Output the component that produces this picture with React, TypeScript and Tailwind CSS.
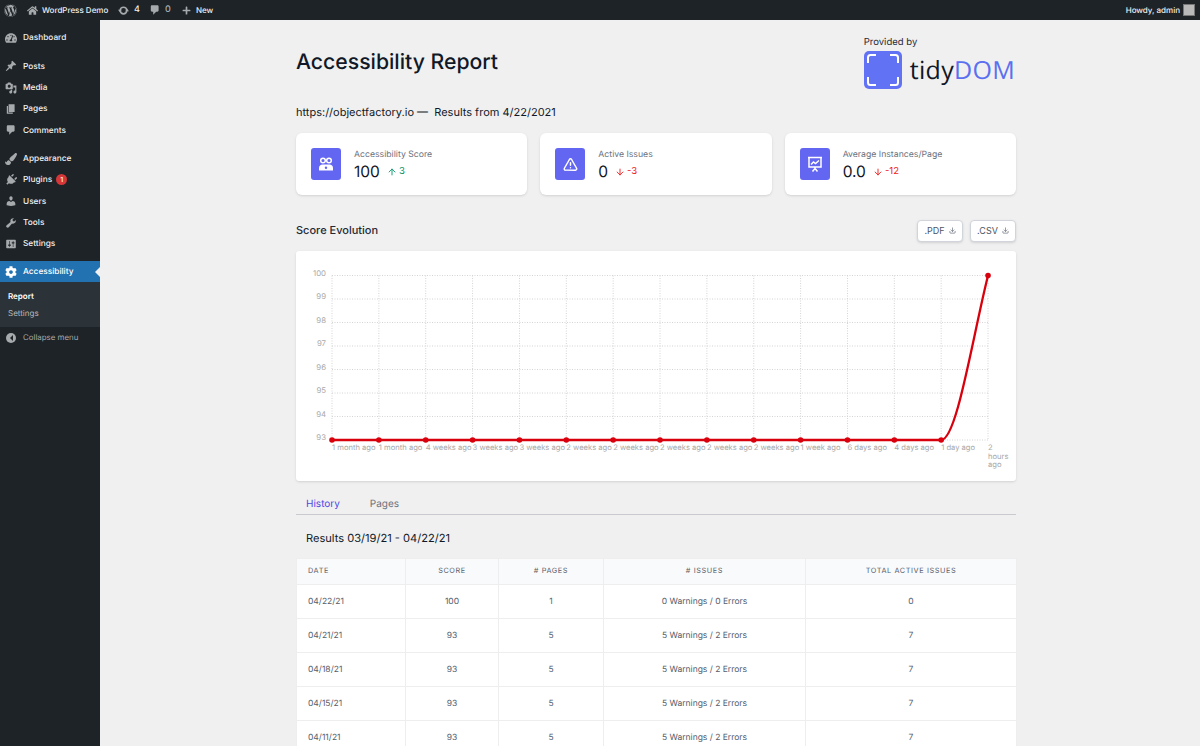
import React from 'react';
import { ArrowDown, ArrowUp, Download, TriangleAlert } from 'lucide-react';
import { FaWordpress, FaHome, FaPlus, FaTachometerAlt, FaPaintBrush, FaPlug, FaCog } from 'react-icons/fa';

type IconProps = { className?: string };

const dashIcon = (d: string) => ({ className }: IconProps) => (
  <svg viewBox="0 0 20 20" className={className} fill="currentColor">
    <path d={d} fillRule="evenodd" />
  </svg>
);

const PinIcon = dashIcon('M10.44 3.02l1.82-1.82 6.36 6.35-1.83 1.82c-1.05-.68-2.48-.57-3.41.35l-.76.76c-.92.93-1.04 2.36-.35 3.41l-1.83 1.82-2.41-2.41-2.8 2.79c-.42.42-3.38 2.71-3.8 2.29s1.86-3.39 2.28-3.81l2.79-2.79L4.1 9.36l1.83-1.82c1.05.69 2.48.57 3.4-.35l.77-.76c.92-.93 1.04-2.36.34-3.41z');
const MediaIcon = dashIcon('M13 11V4c0-.55-.45-1-1-1h-1.67L9 1H5L3.67 3H2c-.55 0-1 .45-1 1v7c0 .55.45 1 1 1h10c.55 0 1-.45 1-1zM7 4.5c1.38 0 2.5 1.12 2.5 2.5S8.38 9.5 7 9.5 4.5 8.38 4.5 7 5.62 4.500 7 4.500zM14 6h5v10.5c0 1.38-1.12 2.5-2.5 2.5S14 17.88 14 16.5s1.12-2.5 2.5-2.5c.17 0 .34.02.5.05V9h-3V6zm-4 8.05V13h2v3.5c0 1.38-1.12 2.5-2.5 2.5S7 17.88 7 16.5 8.12 14 9.5 14c.17 0 .34.02.5.05z');
const PagesIcon = dashIcon('M6 15V2h10v13H6zm-1 1h8v2H3V5h2v11z');
const CommentIcon = dashIcon('M5 2h9c1.1 0 2 .9 2 2v7c0 1.1-.9 2-2 2h-2l-5 5v-5H5c-1.1 0-2-.9-2-2V4c0-1.1.9-2 2-2z');
const UsersIcon = dashIcon('M10 9.25c-2.27 0-2.73-3.44-2.73-3.44C7 4.02 7.82 2 9.97 2c2.16 0 2.98 2.02 2.71 3.81 0 0-.41 3.44-2.68 3.44zm0 2.57L12.72 10c2.39 0 4.52 2.33 4.52 4.53v2.49s-3.65 1.13-7.24 1.13c-3.65 0-7.24-1.13-7.24-1.13v-2.49c0-2.25 1.94-4.48 4.48-4.48z');
const ToolsIcon = dashIcon('M16.68 9.77c-1.34 1.34-3.3 1.67-4.95.99l-5.41 6.52c-.99.99-2.59.99-3.57 0-.99-.98-.99-2.58 0-3.57l6.52-5.42c-.68-1.65-.35-3.61.99-4.95 1.28-1.28 3.12-1.62 4.72-1.06l-2.89 2.89 2.82 2.82 2.86-2.87c.53 1.58.18 3.39-1.09 4.65z');
const SettingsIcon = dashIcon('M18 16V4c0-.55-.45-1-1-1H3c-.55 0-1 .45-1 1v12c0 .55.45 1 1 1h14c.55 0 1-.45 1-1zM8 11h1c.55 0 1 .45 1 1s-.45 1-1 1H8v1.5c0 .28-.22.5-.5.5s-.5-.22-.5-.5V13H6c-.55 0-1-.45-1-1s.45-1 1-1h1V5.500c0-.28.22-.5.5-.5s.5.22.5.5V11zm5-2h-1c-.55 0-1-.45-1-1s.45-1 1-1h1V5.500c0-.28.22-.5.5-.5s.5.22.5.5V7h1c.55 0 1 .45 1 1s-.45 1-1 1h-1v5.5c0 .28-.22.5-.5.5s-.5-.22-.5-.5V9z');

const PlugIcon = ({ className }: IconProps) => <FaPlug className={`${className} rotate-45`} />;

const menuGroups: { label: string; icon: React.FC<IconProps>; badge?: string }[][] = [
  [{ label: 'Dashboard', icon: FaTachometerAlt }],
  [
    { label: 'Posts', icon: PinIcon },
    { label: 'Media', icon: MediaIcon },
    { label: 'Pages', icon: PagesIcon },
    { label: 'Comments', icon: CommentIcon },
  ],
  [
    { label: 'Appearance', icon: FaPaintBrush },
    { label: 'Plugins', icon: PlugIcon, badge: '1' },
    { label: 'Users', icon: UsersIcon },
    { label: 'Tools', icon: ToolsIcon },
    { label: 'Settings', icon: SettingsIcon },
  ],
];

const rows = [
  ['04/22/21', '100', '1', '0 Warnings / 0 Errors', '0'],
  ['04/21/21', '93', '5', '5 Warnings / 2 Errors', '7'],
  ['04/18/21', '93', '5', '5 Warnings / 2 Errors', '7'],
  ['04/15/21', '93', '5', '5 Warnings / 2 Errors', '7'],
  ['04/11/21', '93', '5', '5 Warnings / 2 Errors', '7'],
];

const xLabels = [
  '1 month ago', '1 month ago', '4 weeks ago', '3 weeks ago', '3 weeks ago', '2 weeks ago', '2 weeks ago',
  '2 weeks ago', '2 weeks ago', '2 weeks ago', '1 week ago', '6 days ago', '4 days ago', '1 day ago',
];

function UpdateIcon({ className }: IconProps) {
  return (
    <svg viewBox="0 0 20 20" className={className} fill="none" stroke="currentColor" strokeWidth="3">
      <circle cx="10" cy="10" r="6" />
      <path d="M0 8.500h7L3.500 13zM20 11.500h-7l3.500-4.500z" fill="currentColor" stroke="none" />
    </svg>
  );
}

function PeopleIcon() {
  return (
    <svg viewBox="0 0 16 14" className="w-[16px] h-[14px]" fill="none">
      <circle cx="5" cy="3.500" r="2.300" stroke="white" strokeWidth="1.500" />
      <circle cx="11" cy="3.500" r="2.300" stroke="white" strokeWidth="1.500" />
      <path d="M1 13.500v-2.500c0-2 1.500-3.500 3.500-3.500h7c2 0 3.500 1.500 3.500 3.500v2.500z" fill="white" />
      <circle cx="8" cy="10.800" r="1.200" fill="#6366f1" />
    </svg>
  );
}

function PresentationIcon() {
  return (
    <svg viewBox="0 0 16 16" className="w-[16px] h-[16px]" fill="none" stroke="white" strokeWidth="1.500">
      <path d="M1 1.500h14M2 1.500v9.500h12v-9.500" />
      <path d="M4 8.500l2.500-2.500 2 1.500L12 4.500" />
      <path d="M8 11v1.500M5.500 15.500L8 12.500l2.500 3" />
    </svg>
  );
}

function StatCard({ icon, title, value, delta, up }: { icon: React.ReactNode; title: string; value: string; delta: string; up?: boolean }) {
  return (
    <div className="h-[62px] bg-white rounded-md shadow-sm flex items-center pl-[15px]">
      <div className="w-[30px] h-[32px] rounded-[3px] bg-[#6366f1] flex items-center justify-center">{icon}</div>
      <div className="ml-[13px] mt-[3px]">
        <div className="text-[8.7px] leading-[12px] text-[#6b7280]">{title}</div>
        <div className="flex items-center mt-[1px] h-[20px]">
          <span className="text-[15.5px] leading-[20px] text-[#111827]">{value}</span>
          <span className={`ml-[7px] flex items-center text-[9.5px] ${up ? 'text-[#059669]' : 'text-[#ef1c1c]'}`}>
            {up ? <ArrowUp className="w-[10px] h-[10px] mr-[2px]" strokeWidth={2.2} /> : <ArrowDown className="w-[10px] h-[10px] mr-[2px]" strokeWidth={2.2} />}
            {delta}
          </span>
        </div>
      </div>
    </div>
  );
}

function ExportButton({ label }: { label: string }) {
  return (
    <button className="h-[22px] w-[46px] bg-white border border-[#d1d5db] rounded-[4px] shadow-sm flex items-center justify-center text-[9px] text-[#4b5563]">
      {label}
      <Download className="w-[7px] h-[7px] ml-[4px]" />
    </button>
  );
}

function ScoreChart() {
  const x0 = 36;
  const step = 46.86;
  const yTop = 24.5;
  const yStep = 23.5;
  const yBottom = yTop + yStep * 7;
  const xs = Array.from({ length: 15 }, (_, i) => x0 + step * i);
  return (
    <svg viewBox="0 0 720 230" className="w-[720px] h-[230px] block">
      {[0, 1, 2, 3, 4, 5, 6, 7].map(i => (
        <g key={i}>
          <line x1={x0} x2={xs[14]} y1={yTop + i * yStep} y2={yTop + i * yStep} stroke="#d4d4d4" strokeDasharray="1 1.500" />
          <text x={30} y={yTop + i * yStep} textAnchor="end" fontSize="7.800" fill="#a8a8a8">{100 - i}</text>
        </g>
      ))}
      {xs.map(x => (
        <line key={x} x1={x} x2={x} y1={yTop} y2={yBottom} stroke="#d4d4d4" strokeDasharray="1 1.500" />
      ))}
      {xLabels.map((label, i) => (
        <text key={i} x={xs[i]} y={yBottom + 10} fontSize="7.600" fill="#a8a8a8">{label}</text>
      ))}
      <text x={xs[14]} y={yBottom + 10} fontSize="7.600" fill="#a8a8a8">2</text>
      <text x={xs[14]} y={yBottom + 18.5} fontSize="7.600" fill="#a8a8a8">hours</text>
      <text x={xs[14]} y={yBottom + 27} fontSize="7.600" fill="#a8a8a8">ago</text>
      <path
        d={`M${xs[0]} ${yBottom}H${xs[13]}C${xs[13] + 15.6} ${yBottom} ${xs[14] - 15.6} ${yTop + 62} ${xs[14]} ${yTop}`}
        fill="none"
        stroke="#d9000d"
        strokeWidth="2.300"
      />
      {xs.map((x, i) => (
        <circle key={x} cx={x} cy={i === 14 ? yTop : yBottom} r="2.800" fill="#d9000d" />
      ))}
    </svg>
  );
}

export default function App() {
  return (
    <div className="w-[1200px] h-[746px] overflow-hidden bg-[#f0f0f0] flex flex-col font-['Inter',sans-serif] [text-rendering:geometricPrecision]">
      {/* Admin bar */}
      <div className="h-[20px] bg-[#1d2327] flex items-center text-[#f0f0f1] text-[8px] font-medium shrink-0">
        <FaWordpress className="w-[13px] h-[13px] ml-[4px] text-[#a7aaad]" />
        <FaHome className="w-[11px] h-[11px] ml-[10px] text-[#a7aaad]" />
        <span className="ml-[4px] w-[66px] whitespace-nowrap">WordPress Demo</span>
        <UpdateIcon className="w-[11px] h-[11px] ml-[10px] text-[#a7aaad]" />
        <span className="ml-[5px] w-[5px] text-[9px]">4</span>
        <CommentIcon className="w-[12px] h-[12px] ml-[10px] text-[#a7aaad]" />
        <span className="ml-[4px] w-[5px] text-[9px] text-[#a7aaad]">0</span>
        <FaPlus className="w-[9px] h-[9px] ml-[12px] text-[#a7aaad]" />
        <span className="ml-[5px]">New</span>
        <span className="ml-auto">Howdy, admin</span>
        <div className="w-[12px] h-[12px] ml-[3px] mr-[5px] bg-[#b9b9b9] border border-[#777]" />
      </div>
      <div className="flex flex-1 min-h-0">
        {/* Sidebar */}
        <div className="w-[100px] bg-[#1d2327] text-[#f0f0f1] text-[8.3px] font-medium shrink-0">
          <div className="pt-[7.500px]">
            {menuGroups.map((group, g) => (
              <div key={g} className="mb-[7px]">
                {group.map(item => (
                  <div key={item.label} className="h-[21.300px] flex items-center">
                    <item.icon className="w-[12px] h-[12px] ml-[5px] text-[#a7aaad]" />
                    <span className="ml-[6px] mt-[1px]">{item.label}</span>
                    {item.badge && (
                      <span className="ml-[4px] w-[11px] h-[11px] rounded-full bg-[#d63638] text-white text-[7px] flex items-center justify-center">{item.badge}</span>
                    )}
                  </div>
                ))}
              </div>
            ))}
          </div>
          <div className="relative h-[21px] bg-[#2271b1] text-white flex items-center">
            <FaCog className="w-[12px] h-[12px] ml-[5px]" />
            <span className="ml-[6px]">Accessibility</span>
            <div className="absolute right-0 top-[6px] w-0 h-0 border-y-[5px] border-y-transparent border-r-[5px] border-r-[#f0f0f0]" />
          </div>
          <div className="bg-[#2c3338] h-[45px] pt-[5.500px] pl-[8px] text-[8px] leading-[17.500px]">
            <div className="font-semibold text-white">Report</div>
            <div className="font-normal text-[#b4b9be]">Settings</div>
          </div>
          <div className="h-[21px] flex items-center text-[#a7aaad] text-[7.9px] font-normal">
            <div className="w-[10px] h-[10px] ml-[6px] rounded-full bg-[#a7aaad] flex items-center justify-center">
              <div className="w-0 h-0 border-y-[3px] border-y-transparent border-r-[3px] border-r-[#1d2327]" />
            </div>
            <span className="ml-[7px]">Collapse menu</span>
          </div>
        </div>

        {/* Main */}
        <div className="flex-1 pl-[196px]">
          <div className="w-[720px]">
            <div className="flex justify-between h-[72px]">
              <h1 className="mt-[28px] text-[21.200px] leading-[28px] font-medium text-[#111827]">Accessibility Report</h1>
              <div className="mt-[17px]">
                <div className="text-[9.500px] leading-[12px] text-[#1f2937]">Provided by</div>
                <div className="flex items-center mt-[2px] mr-[1px]">
                  <svg viewBox="0 0 38 38" className="w-[38px] h-[38px]" fill="none">
                    <rect width="38" height="38" rx="5" fill="#6272f5" />
                    <path d="M4 12V6.500A2.500 2.500 0 0 1 6.500 4H12M26 4h5.500A2.500 2.500 0 0 1 34 6.500V12M34 26v5.500A2.500 2.500 0 0 1 31.500 34H26M12 34H6.500A2.500 2.500 0 0 1 4 31.500V26" stroke="white" strokeWidth="2" />
                  </svg>
                  <span className="ml-[8px] text-[25px] leading-[30px] font-['Open_Sans',sans-serif] text-[#111827] tracking-[0.3px]">
                    tidy<span className="text-[#5b70f0]">DOM</span>
                  </span>
                </div>
              </div>
            </div>
            <div className="mt-[12px] text-[11px] leading-[16px] text-[#111827]">https://objectfactory.io —&nbsp; Results from 4/22/2021</div>
            <div className="grid grid-cols-3 gap-[13px] mt-[13px]">
              <StatCard icon={<PeopleIcon />} title="Accessibility Score" value="100" delta="3" up />
              <StatCard icon={<TriangleAlert className="w-[15px] h-[15px] text-white" strokeWidth={2.4} />} title="Active Issues" value="0" delta="-3" />
              <StatCard icon={<PresentationIcon />} title="Average Instances/Page" value="0.0" delta="-12" />
            </div>
            <div className="flex items-center justify-between mt-[24px] h-[23px]">
              <div className="text-[11px] font-medium text-[#1f2937]">Score Evolution</div>
              <div className="flex gap-[7px]">
                <ExportButton label=".PDF" />
                <ExportButton label=".CSV" />
              </div>
            </div>
            <div className="mt-[9px] h-[230px] bg-white rounded-[3px] shadow-sm">
              <ScoreChart />
            </div>
            <div className="mt-[11px] h-[23px] pt-[2px] flex items-center border-b border-[#c9c9d0] text-[10px] pl-[10px]">
              <span className="text-[#4f46e5]">History</span>
              <span className="ml-[30px] text-[#6b7280]">Pages</span>
            </div>
            <div className="mt-[15px] pl-[10px] text-[11.100px] leading-[16px] text-[#111827]">Results 03/19/21 - 04/22/21</div>
            <table className="mt-[12px] w-[720px] table-fixed border-collapse text-[8.500px] text-[#565d6b]">
              <colgroup>
                <col className="w-[109px]" />
                <col className="w-[93px]" />
                <col className="w-[105px]" />
                <col className="w-[202px]" />
                <col className="w-[211px]" />
              </colgroup>
              <thead>
                <tr className="h-[26px] bg-[#f9fafb] text-[7.300px] tracking-[0.6px] uppercase">
                  <th className="font-normal text-left pl-[11px] border border-[#eeeeee]">Date</th>
                  <th className="font-normal border border-[#eeeeee]">Score</th>
                  <th className="font-normal border border-[#eeeeee]"># Pages</th>
                  <th className="font-normal border border-[#eeeeee]"># Issues</th>
                  <th className="font-normal border border-[#eeeeee]">Total Active Issues</th>
                </tr>
              </thead>
              <tbody className="bg-white">
                {rows.map(row => (
                  <tr key={row[0]} className="h-[34px]">
                    {row.map((cell, i) => (
                      <td key={i} className={`border border-[#eeeeee] pt-[1px] ${i === 0 ? 'text-left pl-[11px]' : 'text-center'}`}>{cell}</td>
                    ))}
                  </tr>
                ))}
              </tbody>
            </table>
          </div>
        </div>
      </div>
    </div>
  );
}
